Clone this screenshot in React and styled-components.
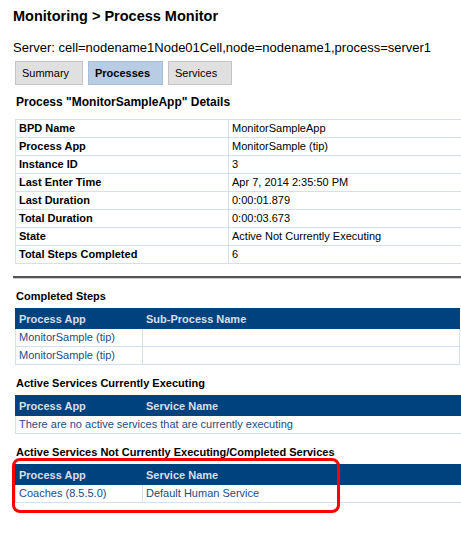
import React from 'react';
import styled, { createGlobalStyle } from 'styled-components';

const GlobalStyle = createGlobalStyle`
  body {
    margin: 0;
    background: #ffffff;
    font-family: "Liberation Sans", Arial, sans-serif;
    color: #000;
  }
`;

const Page = styled.div`
  width: 461px;
  height: 533px;
  overflow: hidden;
  padding-left: 13px;
  box-sizing: border-box;
`;

const Title = styled.h1`
  font-size: 14.5px;
  font-weight: bold;
  margin: 0;
  padding-top: 8px;
  line-height: 17px;
`;

const Server = styled.div`
  font-size: 13px;
  margin-top: 15px;
  line-height: 15px;
`;

const Tabs = styled.div`
  display: flex;
  gap: 5px;
  margin: 6px 0 0 2px;
`;

const Tab = styled.div`
  height: 24px;
  box-sizing: border-box;
  width: ${p => p.w}px;
  display: flex;
  align-items: center;
  padding-left: 6px;
  font-size: 11px;
  font-weight: ${p => (p.active ? 'bold' : 'normal')};
  background: ${p => (p.active ? '#b8cce4' : '#e0e0e0')};
  border: 1px solid ${p => (p.active ? '#a9bdd6' : '#c4c4c4')};
`;

const Heading = styled.h2`
  font-size: ${p => (p.big ? 12 : 11)}px;
  font-weight: bold;
  margin: 0;
  padding-left: 3px;
  line-height: 14px;
  margin-top: ${p => p.top}px;
`;

const Table = styled.table`
  border-collapse: collapse;
  width: ${p => p.w}px;
  margin-left: 2px;
  margin-top: ${p => p.top}px;
  font-size: 11px;
  table-layout: fixed;
`;

const Cell = styled.td`
  border: 1px solid #d3e0ef;
  height: 17px;
  padding: 0 0 0 3px;
  line-height: 17px;
  white-space: nowrap;
  overflow: hidden;
  color: ${p => (p.link ? '#1d4b85' : '#000')};
  font-weight: ${p => (p.label ? 'bold' : 'normal')};
`;

const Head = styled.th`
  background: #00427e;
  color: #d8dfea;
  text-align: left;
  font-weight: bold;
  height: 19px;
  padding: 0 0 0 3px;
  border: 1px solid #00427e;
  border-left: ${p => (p.split ? '1px solid #1d5590' : '1px solid #00427e')};
`;

const Rule = styled.hr`
  border: none;
  border-top: 2px solid #555;
  border-bottom: 1px solid #ccc;
  margin: 12px 0 0 0;
  height: 0;
`;

const Highlight = styled.div`
  position: relative;
  padding-top: 5px;
`;

const RedBox = styled.div`
  position: absolute;
  left: -1px;
  top: -1px;
  width: 328px;
  height: 55px;
  border: 3px solid #f00;
  border-radius: 8px;
  box-sizing: border-box;
  pointer-events: none;
`;

const details = [
  ['BPD Name', 'MonitorSampleApp'],
  ['Process App', 'MonitorSample (tip)'],
  ['Instance ID', '3'],
  ['Last Enter Time', 'Apr 7, 2014 2:35:50 PM'],
  ['Last Duration', '0:00:01.879'],
  ['Total Duration', '0:00:03.673'],
  ['State', 'Active Not Currently Executing'],
  ['Total Steps Completed', '6'],
];

const ListTable = ({ cols, rows, top, w = 445 }) => (
  <Table w={w} top={top}>
    <colgroup>
      <col style={{ width: 127 }} />
      <col />
    </colgroup>
    <thead>
      <tr>
        <Head>{cols[0]}</Head>
        <Head split>{cols[1]}</Head>
      </tr>
    </thead>
    <tbody>
      {rows.map((r, i) =>
        r.length === 1 ? (
          <tr key={i}>
            <Cell link colSpan={2}>{r[0]}</Cell>
          </tr>
        ) : (
          <tr key={i}>
            <Cell link>{r[0]}</Cell>
            <Cell link>{r[1]}</Cell>
          </tr>
        )
      )}
    </tbody>
  </Table>
);

export default function App() {
  return (
    <Page>
      <GlobalStyle />
      <Title>Monitoring &gt; Process Monitor</Title>
      <Server>Server: cell=nodename1Node01Cell,node=nodename1,process=server1</Server>
      <Tabs>
        <Tab w={68}>Summary</Tab>
        <Tab w={75} active>Processes</Tab>
        <Tab w={64}>Services</Tab>
      </Tabs>
      <Heading big top={10}>Process "MonitorSampleApp" Details</Heading>
      <Table w={452} top={10}>
        <colgroup>
          <col style={{ width: 213 }} />
          <col />
        </colgroup>
        <tbody>
          {details.map(([k, v]) => (
            <tr key={k}>
              <Cell label>{k}</Cell>
              <Cell>{v}</Cell>
            </tr>
          ))}
        </tbody>
      </Table>
      <Rule />
      <Heading top={10}>Completed Steps</Heading>
      <ListTable
        top={5}
        cols={['Process App', 'Sub-Process Name']}
        rows={[['MonitorSample (tip)', ''], ['MonitorSample (tip)', '']]}
      />
      <Heading top={11}>Active Services Currently Executing</Heading>
      <ListTable
        top={5}
        w={448}
        cols={['Process App', 'Service Name']}
        rows={[['There are no active services that are currently executing']]}
      />
      <Heading top={11}>Active Services Not Currently Executing/Completed Services</Heading>
      <Highlight>
        <ListTable
          top={0}
          w={448}
          cols={['Process App', 'Service Name']}
          rows={[['Coaches (8.5.5.0)', 'Default Human Service']]}
        />
        <RedBox />
      </Highlight>
    </Page>
  );
}
